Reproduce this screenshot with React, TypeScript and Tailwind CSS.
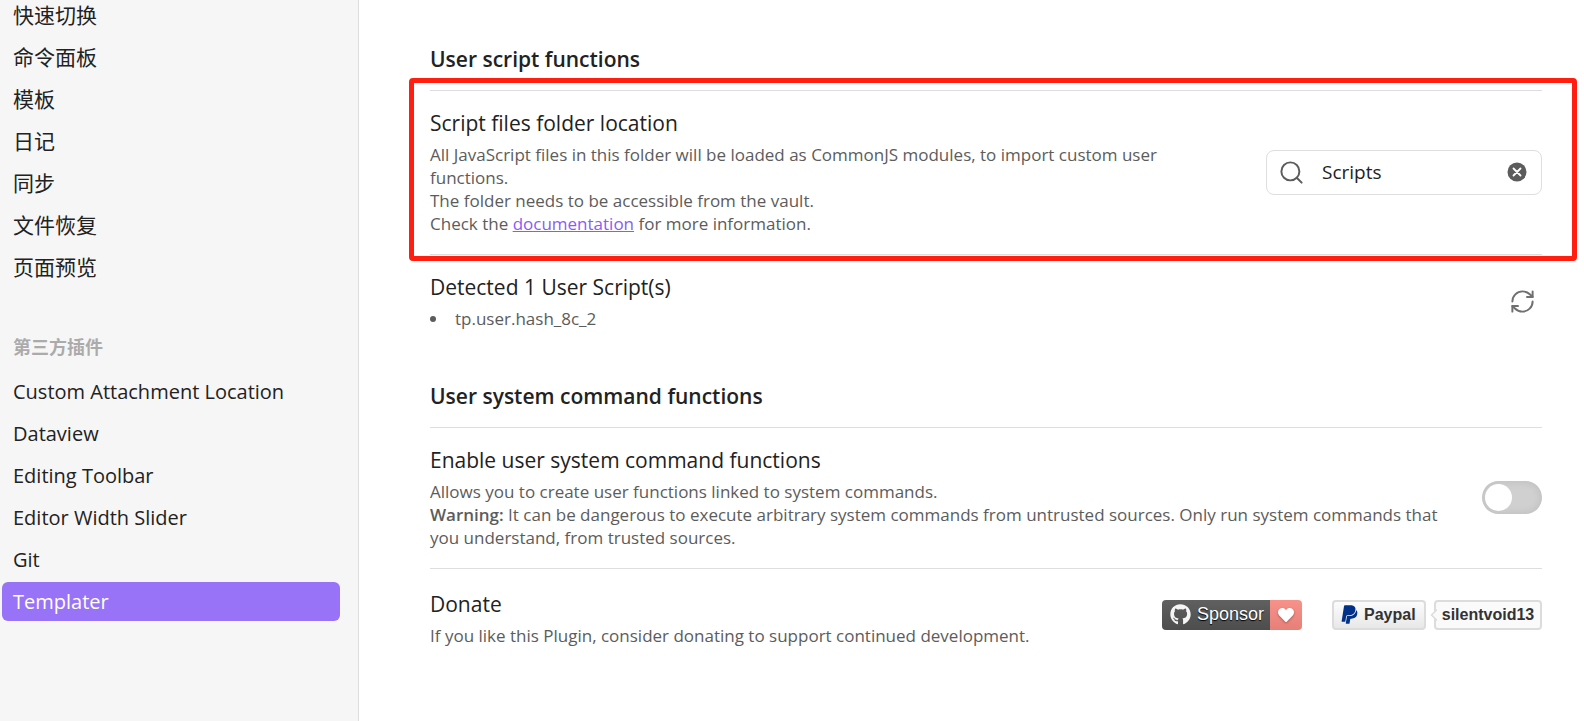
import React, { useState } from "react";
import type { ReactNode } from "react";
import { RefreshCw, Search } from "lucide-react";
import { FaGithub, FaHeart, FaPaypal } from "react-icons/fa";

const coreItems = ["快速切换", "命令面板", "模板", "日记", "同步", "文件恢复", "页面预览"];
const communityItems = [
  "Custom Attachment Location",
  "Dataview",
  "Editing Toolbar",
  "Editor Width Slider",
  "Git",
  "Templater",
];

function NavItem({ label, active, onSelect }: { label: string; active: boolean; onSelect: () => void }) {
  return (
    <li>
      <button
        type="button"
        onClick={onSelect}
        className={
          active
            ? "flex h-[39px] w-full items-center rounded-md bg-[#9873f7] px-[11px] text-left text-white"
            : "flex h-[39px] w-full items-center rounded-md px-[11px] text-left text-[#222222]"
        }
      >
        {label}
      </button>
    </li>
  );
}

interface SettingItemProps {
  title: string;
  children: ReactNode;
  control?: ReactNode;
  className?: string;
}

function SettingItem({ title, children, control, className = "gap-8 pt-[18px]" }: SettingItemProps) {
  return (
    <div className={`flex items-center border-t border-[#dedede] pb-[19px] ${className}`}>
      <div className="flex-1">
        <h3 className="text-[21px] leading-[28px]">{title}</h3>
        <div className="mt-[6px] text-[17px] leading-[23px] text-[#5c5c5c]">{children}</div>
      </div>
      {control}
    </div>
  );
}

export default function App() {
  const [selected, setSelected] = useState("Templater");
  const [folder, setFolder] = useState("Scripts");
  const [enabled, setEnabled] = useState(false);

  return (
    <div className="flex h-screen overflow-hidden bg-white font-['Open_Sans','Noto_Sans_CJK_SC',sans-serif] text-[#222222]">
      <nav className="w-[359px] shrink-0 overflow-hidden border-r border-[#dedede] bg-[#f6f6f6] pr-[18px] pl-[2px] text-[20px]">
        <ul className="-mt-[5px] flex flex-col gap-[3px] font-['Noto_Sans_CJK_SC',sans-serif] text-[21px]">
          {coreItems.map((item) => (
            <NavItem key={item} label={item} active={item === selected} onSelect={() => setSelected(item)} />
          ))}
        </ul>
        <h2 className="mt-[49px] mb-[13px] px-[11px] text-[18px] leading-[24px] font-bold text-[#ababab]">
          第三方插件
        </h2>
        <ul className="flex flex-col gap-[3px]">
          {communityItems.map((item) => (
            <NavItem key={item} label={item} active={item === selected} onSelect={() => setSelected(item)} />
          ))}
        </ul>
      </nav>

      <main className="min-w-0 flex-1 pt-[44px] pr-[42px] pl-[71px]">
        <section>
          <h2 className="mb-[16px] text-[21px] leading-[30px] font-semibold">User script functions</h2>
          <div className="relative">
            <SettingItem
              title="Script files folder location"
              className="gap-12 pt-[18px]"
              control={
                <div className="flex h-[45px] w-[276px] shrink-0 items-center rounded-lg border border-[#dedede] pr-[14px] pl-[11px]">
                  <Search className="size-[27px] shrink-0 text-[#5c5c5c]" strokeWidth={1.75} />
                  <input
                    type="text"
                    aria-label="Script files folder location"
                    value={folder}
                    onChange={(e) => setFolder(e.target.value)}
                    className="ml-[17px] min-w-0 flex-1 bg-transparent text-[19px] outline-none"
                  />
                  <button type="button" aria-label="Clear" onClick={() => setFolder("")}>
                    <svg viewBox="0 0 20 20" className="size-[20px]">
                      <circle cx="10" cy="10" r="9.5" fill="#5c5c5c" />
                      <path d="M6.5 6.5l7 7M13.5 6.5l-7 7" stroke="#fff" strokeWidth="1.8" strokeLinecap="round" />
                    </svg>
                  </button>
                </div>
              }
            >
              <p>
                All JavaScript files in this folder will be loaded as CommonJS modules, to import custom user functions.
              </p>
              <p>The folder needs to be accessible from the vault.</p>
              <p>
                Check the{" "}
                <a href="#documentation" className="text-[#8a5cf5] underline">
                  documentation
                </a>{" "}
                for more information.
              </p>
            </SettingItem>
            <div className="pointer-events-none absolute -top-3 -right-[35px] -bottom-[7px] -left-[21px] rounded-[4px] border-5 border-[#ff1e10]" />
          </div>
          <SettingItem
            title="Detected 1 User Script(s)"
            control={
              <button type="button" aria-label="Refresh" className="mr-[6px]">
                <RefreshCw className="size-[27px] text-[#707070]" strokeWidth={1.75} />
              </button>
            }
          >
            <ul>
              <li className="flex items-center gap-[19px]">
                <span className="size-[6px] rounded-full bg-[#5c5c5c]" />
                tp.user.hash_8c_2
              </li>
            </ul>
          </SettingItem>
        </section>

        <section className="mt-[32px]">
          <h2 className="mb-[16px] text-[21px] leading-[30px] font-semibold">User system command functions</h2>
          <SettingItem
            title="Enable user system command functions"
            control={
              <label className="relative block h-[33px] w-[60px] shrink-0 rounded-full">
                <input
                  type="checkbox"
                  aria-label="Enable user system command functions"
                  checked={enabled}
                  onChange={(e) => setEnabled(e.target.checked)}
                  className="peer block h-[33px] w-[60px] appearance-none rounded-full bg-[#d0d0d0] shadow-[inset_0_0_8px_rgba(0,0,0,0.1)] checked:bg-[#9873f7]"
                />
                <span className="pointer-events-none absolute top-[3px] left-[3px] size-[27px] rounded-full bg-white peer-checked:left-[30px]" />
              </label>
            }
          >
            <p>Allows you to create user functions linked to system commands.</p>
            <p>
              <strong className="font-semibold">Warning:</strong> It can be dangerous to execute arbitrary system
              commands from untrusted sources. Only run system commands that you understand, from trusted sources.
            </p>
          </SettingItem>
          <SettingItem
            title="Donate"
            className="gap-8 pt-[21px]"
            control={
              <div className="flex shrink-0 gap-[30px] pb-2 font-['Liberation_Sans',sans-serif]">
                <a href="#sponsor" className="flex h-[30px] overflow-hidden rounded-[4px] text-[18px] text-white">
                  <span className="flex w-[108px] items-center gap-[6px] bg-linear-to-b from-[#606060] to-[#4d4d4d] pl-[8px] text-shadow-[0_1px_1px_#000]">
                    <FaGithub className="size-[21px] shrink-0 text-[#f5f5f5]" />
                    Sponsor
                  </span>
                  <span className="flex w-[32px] items-center justify-center bg-linear-to-b from-[#f7928a] to-[#e67f78]">
                    <FaHeart className="size-[16px] drop-shadow-[0_1px_1px_rgba(0,0,0,0.3)]" />
                  </span>
                </a>
                <a href="#paypal" className="flex h-[30px] gap-[8px] text-[16px] font-bold text-[#333333]">
                  <span className="flex w-[94px] items-center gap-[4px] rounded-[4px] border-2 border-[#dcdcdc] bg-linear-to-b from-[#fcfcfc] to-[#e8e8e8] pl-[5px]">
                    <FaPaypal className="size-[21px] shrink-0 text-[#003087]" />
                    Paypal
                  </span>
                  <span className="relative flex w-[108px] items-center justify-center rounded-[4px] border-2 border-[#dcdcdc] bg-[#fafafa]">
                    <svg viewBox="0 0 7 12" className="absolute top-[7px] -left-[6px] h-[12px] w-[7px]">
                      <path d="M7 0.5L1.5 6L7 11.5" fill="#fafafa" stroke="#dcdcdc" strokeWidth="1.5" />
                    </svg>
                    silentvoid13
                  </span>
                </a>
              </div>
            }
          >
            If you like this Plugin, consider donating to support continued development.
          </SettingItem>
        </section>
      </main>
    </div>
  );
}
